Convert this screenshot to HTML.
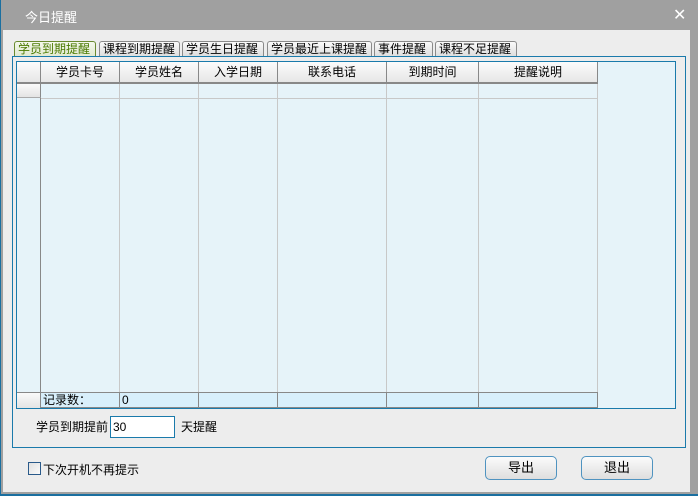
<!DOCTYPE html>
<html><head><meta charset="utf-8"><style>
*{margin:0;padding:0;box-sizing:border-box}
body{width:698px;height:496px;background:#a0a0a0;position:relative;overflow:hidden;font-family:"Liberation Sans","Noto Sans CJK SC","WenQuanYi Zen Hei",sans-serif;font-size:12px;color:#000}
.a{position:absolute}
#win{left:3px;top:30px;width:687px;height:462px;background:#ededed}
.tab{position:absolute;top:41px;height:16px;background:linear-gradient(#fafafa,#dcdcdc);border:1px solid #8a8a8a;border-bottom:none;border-radius:3px 3px 0 0;font-size:12px;line-height:14px;padding-left:3px;white-space:nowrap}
.hd{position:absolute;top:62px;height:22px;background:linear-gradient(#fcfcfc,#e6e6e6);border-right:1px solid #888;border-bottom:2px solid #888;text-align:center;line-height:21px}
.vl{position:absolute;top:84px;height:308px;width:1px;background:#c8c8c8}
.ft{position:absolute;top:392px;height:16px;background:#d8effb;border-right:1px solid #888;border-top:1px solid #888;border-bottom:1px solid #888;line-height:15px;padding-left:2px}
.btn{position:absolute;top:456px;width:72px;height:24px;border:1px solid #4f93c0;border-radius:5px;background:linear-gradient(#fbfbfb,#dedede);text-align:center;line-height:22px;font-size:13px}
</style></head><body>
<div class="a" style="left:0;top:0;width:1px;height:496px;background:#1a6fa0"></div>
<div class="a" style="left:0;top:494px;width:698px;height:2px;background:#1a6fa0"></div>
<div class="a" style="left:25px;top:7px;color:#fff;font-size:13px">今日提醒</div>
<div class="a" style="left:673px;top:5px;color:#fff;font-size:16px">✕</div>
<div id="win" class="a"></div>
<div class="tab" style="left:14px;width:82px;color:#4a7a00;border-color:#6a8a30;background:linear-gradient(#f4f8ec,#dfe8cc);height:17px">学员到期提醒</div>
<div class="tab" style="left:99px;width:81px">课程到期提醒</div>
<div class="tab" style="left:182px;width:82px">学员生日提醒</div>
<div class="tab" style="left:267px;width:105px">学员最近上课提醒</div>
<div class="tab" style="left:374px;width:59px">事件提醒</div>
<div class="tab" style="left:435px;width:82px">课程不足提醒</div>
<div class="a" style="left:12px;top:56px;width:674px;height:392px;border:1px solid #1a7aab;background:#ededed"></div>
<div class="a" style="left:16px;top:61px;width:660px;height:348px;border:1px solid #1a7aab;background:#e6f3f9"></div>
<div class="hd" style="left:17px;width:24px"></div>
<div class="hd" style="left:41px;width:79px">学员卡号</div>
<div class="hd" style="left:120px;width:79px">学员姓名</div>
<div class="hd" style="left:199px;width:79px">入学日期</div>
<div class="hd" style="left:278px;width:109px">联系电话</div>
<div class="hd" style="left:387px;width:92px">到期时间</div>
<div class="hd" style="left:479px;width:119px">提醒说明</div>
<div class="a" style="left:17px;top:84px;width:24px;height:14px;background:linear-gradient(#fafafa,#e4e4e4);border-right:1px solid #888;border-bottom:1px solid #aaa"></div>
<div class="a" style="left:17px;top:98px;width:24px;height:294px;border-right:1px solid #888"></div>
<div class="a" style="left:41px;top:98px;width:557px;height:1px;background:#c8c8c8"></div>
<div class="vl" style="left:119px"></div><div class="vl" style="left:198px"></div><div class="vl" style="left:277px"></div><div class="vl" style="left:386px"></div><div class="vl" style="left:478px"></div><div class="vl" style="left:597px"></div>
<div class="a" style="left:17px;top:392px;width:24px;height:16px;background:linear-gradient(#fafafa,#e4e4e4);border-right:1px solid #888;border-top:1px solid #888"></div>
<div class="ft" style="left:41px;width:79px">记录数：</div>
<div class="ft" style="left:120px;width:79px">0</div>
<div class="ft" style="left:199px;width:79px"></div>
<div class="ft" style="left:278px;width:109px"></div>
<div class="ft" style="left:387px;width:92px"></div>
<div class="ft" style="left:479px;width:119px"></div>
<div class="a" style="left:36px;top:418px;font-size:12px">学员到期提前</div>
<div class="a" style="left:110px;top:416px;width:65px;height:22px;border:1px solid #1a7aab;background:#fff;padding-left:2px;line-height:20px">30</div>
<div class="a" style="left:181px;top:418px">天提醒</div>
<div class="a" style="left:28px;top:462px;width:13px;height:13px;border:1px solid #2a5a8a;background:linear-gradient(135deg,#e0e0e0,#fafafa)"></div>
<div class="a" style="left:43px;top:461px">下次开机不再提示</div>
<div class="btn" style="left:485px">导出</div>
<div class="btn" style="left:581px">退出</div>
</body></html>
